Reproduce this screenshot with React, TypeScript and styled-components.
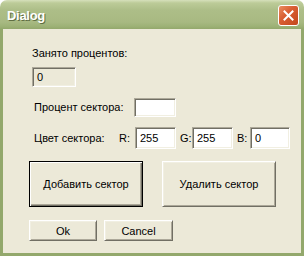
import styled, { createGlobalStyle } from "styled-components";

const GlobalStyle = createGlobalStyle`
  html, body {
    margin: 0;
    padding: 0;
    background: #ffffff;
  }
  body {
    font-family: "Liberation Sans", Arial, sans-serif;
    font-size: 11px;
    color: #000000;
  }
`;

const Window = styled.div`
  width: 304px;
  height: 256px;
  display: flex;
  flex-direction: column;
  box-sizing: border-box;
`;

const TitleBar = styled.div`
  height: 29px;
  flex: none;
  display: flex;
  align-items: center;
  justify-content: space-between;
  padding: 0 5px 0 7px;
  border-radius: 7px 7px 0 0;
  background: linear-gradient(
    to bottom,
    #d6e0bb 0px,
    #bccb98 3px,
    #adbe88 10px,
    #a8b982 22px,
    #9eb277 26px,
    #93a86c 29px
  );
`;

const Title = styled.span`
  font-family: "Liberation Sans", Arial, sans-serif;
  font-weight: bold;
  font-size: 13px;
  letter-spacing: -0.3px;
  color: #ffffff;
  text-shadow: 1px 1px 0 #5f6e42;
  margin-top: 1px;
`;

const CloseButton = styled.div`
  width: 21px;
  height: 21px;
  box-sizing: border-box;
  border: 1px solid #ffffff;
  border-radius: 3px;
  background: linear-gradient(135deg, #ea8e62 0%, #d95f33 40%, #c4461d 100%);
  display: flex;
  align-items: center;
  justify-content: center;
  margin-top: 1px;
`;

const Client = styled.div`
  flex: 1;
  background: #ece9d8;
  border: 3px solid #93a86c;
  border-top: none;
  padding: 18px 0 0 26px;
  display: flex;
  flex-direction: column;
  align-items: flex-start;
`;

const Label = styled.span<{ $indent?: number; $width?: number }>`
  margin-left: ${(p) => p.$indent ?? 0}px;
  width: ${(p) => (p.$width ? `${p.$width}px` : "auto")};
  line-height: 13px;
  white-space: nowrap;
  flex: none;
`;

const Field = styled.div<{ $w: number; $h: number; $readOnly?: boolean }>`
  width: ${(p) => p.$w}px;
  height: ${(p) => p.$h}px;
  box-sizing: border-box;
  flex: none;
  background: ${(p) => (p.$readOnly ? "#ece9d8" : "#ffffff")};
  border: 1px solid;
  border-color: #aca899 #ffffff #ffffff #aca899;
  box-shadow: inset 1px 1px 0 #716f64, inset -1px -1px 0 #f1efe2;
  padding: 0 0 0 4px;
  display: flex;
  align-items: center;
  line-height: 13px;
`;

const Row = styled.div<{ $top: number; $h: number; $gap?: number }>`
  display: flex;
  align-items: center;
  margin-top: ${(p) => p.$top}px;
  height: ${(p) => p.$h}px;
  gap: ${(p) => p.$gap ?? 0}px;
`;

const ReadOnlyWrap = styled.div`
  margin: 7px 0 0 3px;
`;

const Button = styled.div<{ $w: number; $h: number; $default?: boolean }>`
  width: ${(p) => p.$w}px;
  height: ${(p) => p.$h}px;
  box-sizing: border-box;
  background: #ece9d8;
  display: flex;
  align-items: center;
  justify-content: center;
  flex: none;
  border: 1px solid;
  border-color: ${(p) =>
    p.$default ? "#000000" : "#ffffff #716f64 #716f64 #ffffff"};
  box-shadow: ${(p) =>
    p.$default
      ? "inset 1px 1px 0 #ffffff, inset -1px -1px 0 #716f64, inset -2px -2px 0 #aca899"
      : "inset 1px 1px 0 #f1efe2, inset -1px -1px 0 #aca899"};
`;

const App = () => {
  return (
    <>
      <GlobalStyle />
      <Window>
        <TitleBar>
          <Title>Dialog</Title>
          <CloseButton>
            <svg width="11" height="11" viewBox="0 0 11 11">
              <path
                d="M1.5 1.5 L9.5 9.5 M9.5 1.5 L1.5 9.5"
                stroke="#ffffff"
                strokeWidth="2"
                strokeLinecap="square"
              />
            </svg>
          </CloseButton>
        </TitleBar>
        <Client>
          <Label $indent={3}>Занято процентов:</Label>
          <ReadOnlyWrap>
            <Field $w={44} $h={20} $readOnly>
              0
            </Field>
          </ReadOnlyWrap>
          <Row $top={11} $h={19}>
            <Label $indent={5} $width={100}>
              Процент сектора:
            </Label>
            <Field $w={42} $h={19} />
          </Row>
          <Row $top={10} $h={22}>
            <Label $indent={5} $width={85}>
              Цвет сектора:
            </Label>
            <Label $width={16}>R:</Label>
            <Field $w={41} $h={22}>
              255
            </Field>
            <Label $indent={4} $width={12}>
              G:
            </Label>
            <Field $w={41} $h={22}>
              255
            </Field>
            <Label $indent={4} $width={13}>
              B:
            </Label>
            <Field $w={40} $h={22}>
              0
            </Field>
          </Row>
          <Row $top={12} $h={46} $gap={19}>
            <Button $w={114} $h={46} $default>
              Добавить сектор
            </Button>
            <Button $w={114} $h={46}>
              Удалить сектор
            </Button>
          </Row>
          <Row $top={13} $h={21} $gap={7}>
            <Button $w={68} $h={21}>
              Ok
            </Button>
            <Button $w={69} $h={21}>
              Cancel
            </Button>
          </Row>
        </Client>
      </Window>
    </>
  );
};

export default App;
